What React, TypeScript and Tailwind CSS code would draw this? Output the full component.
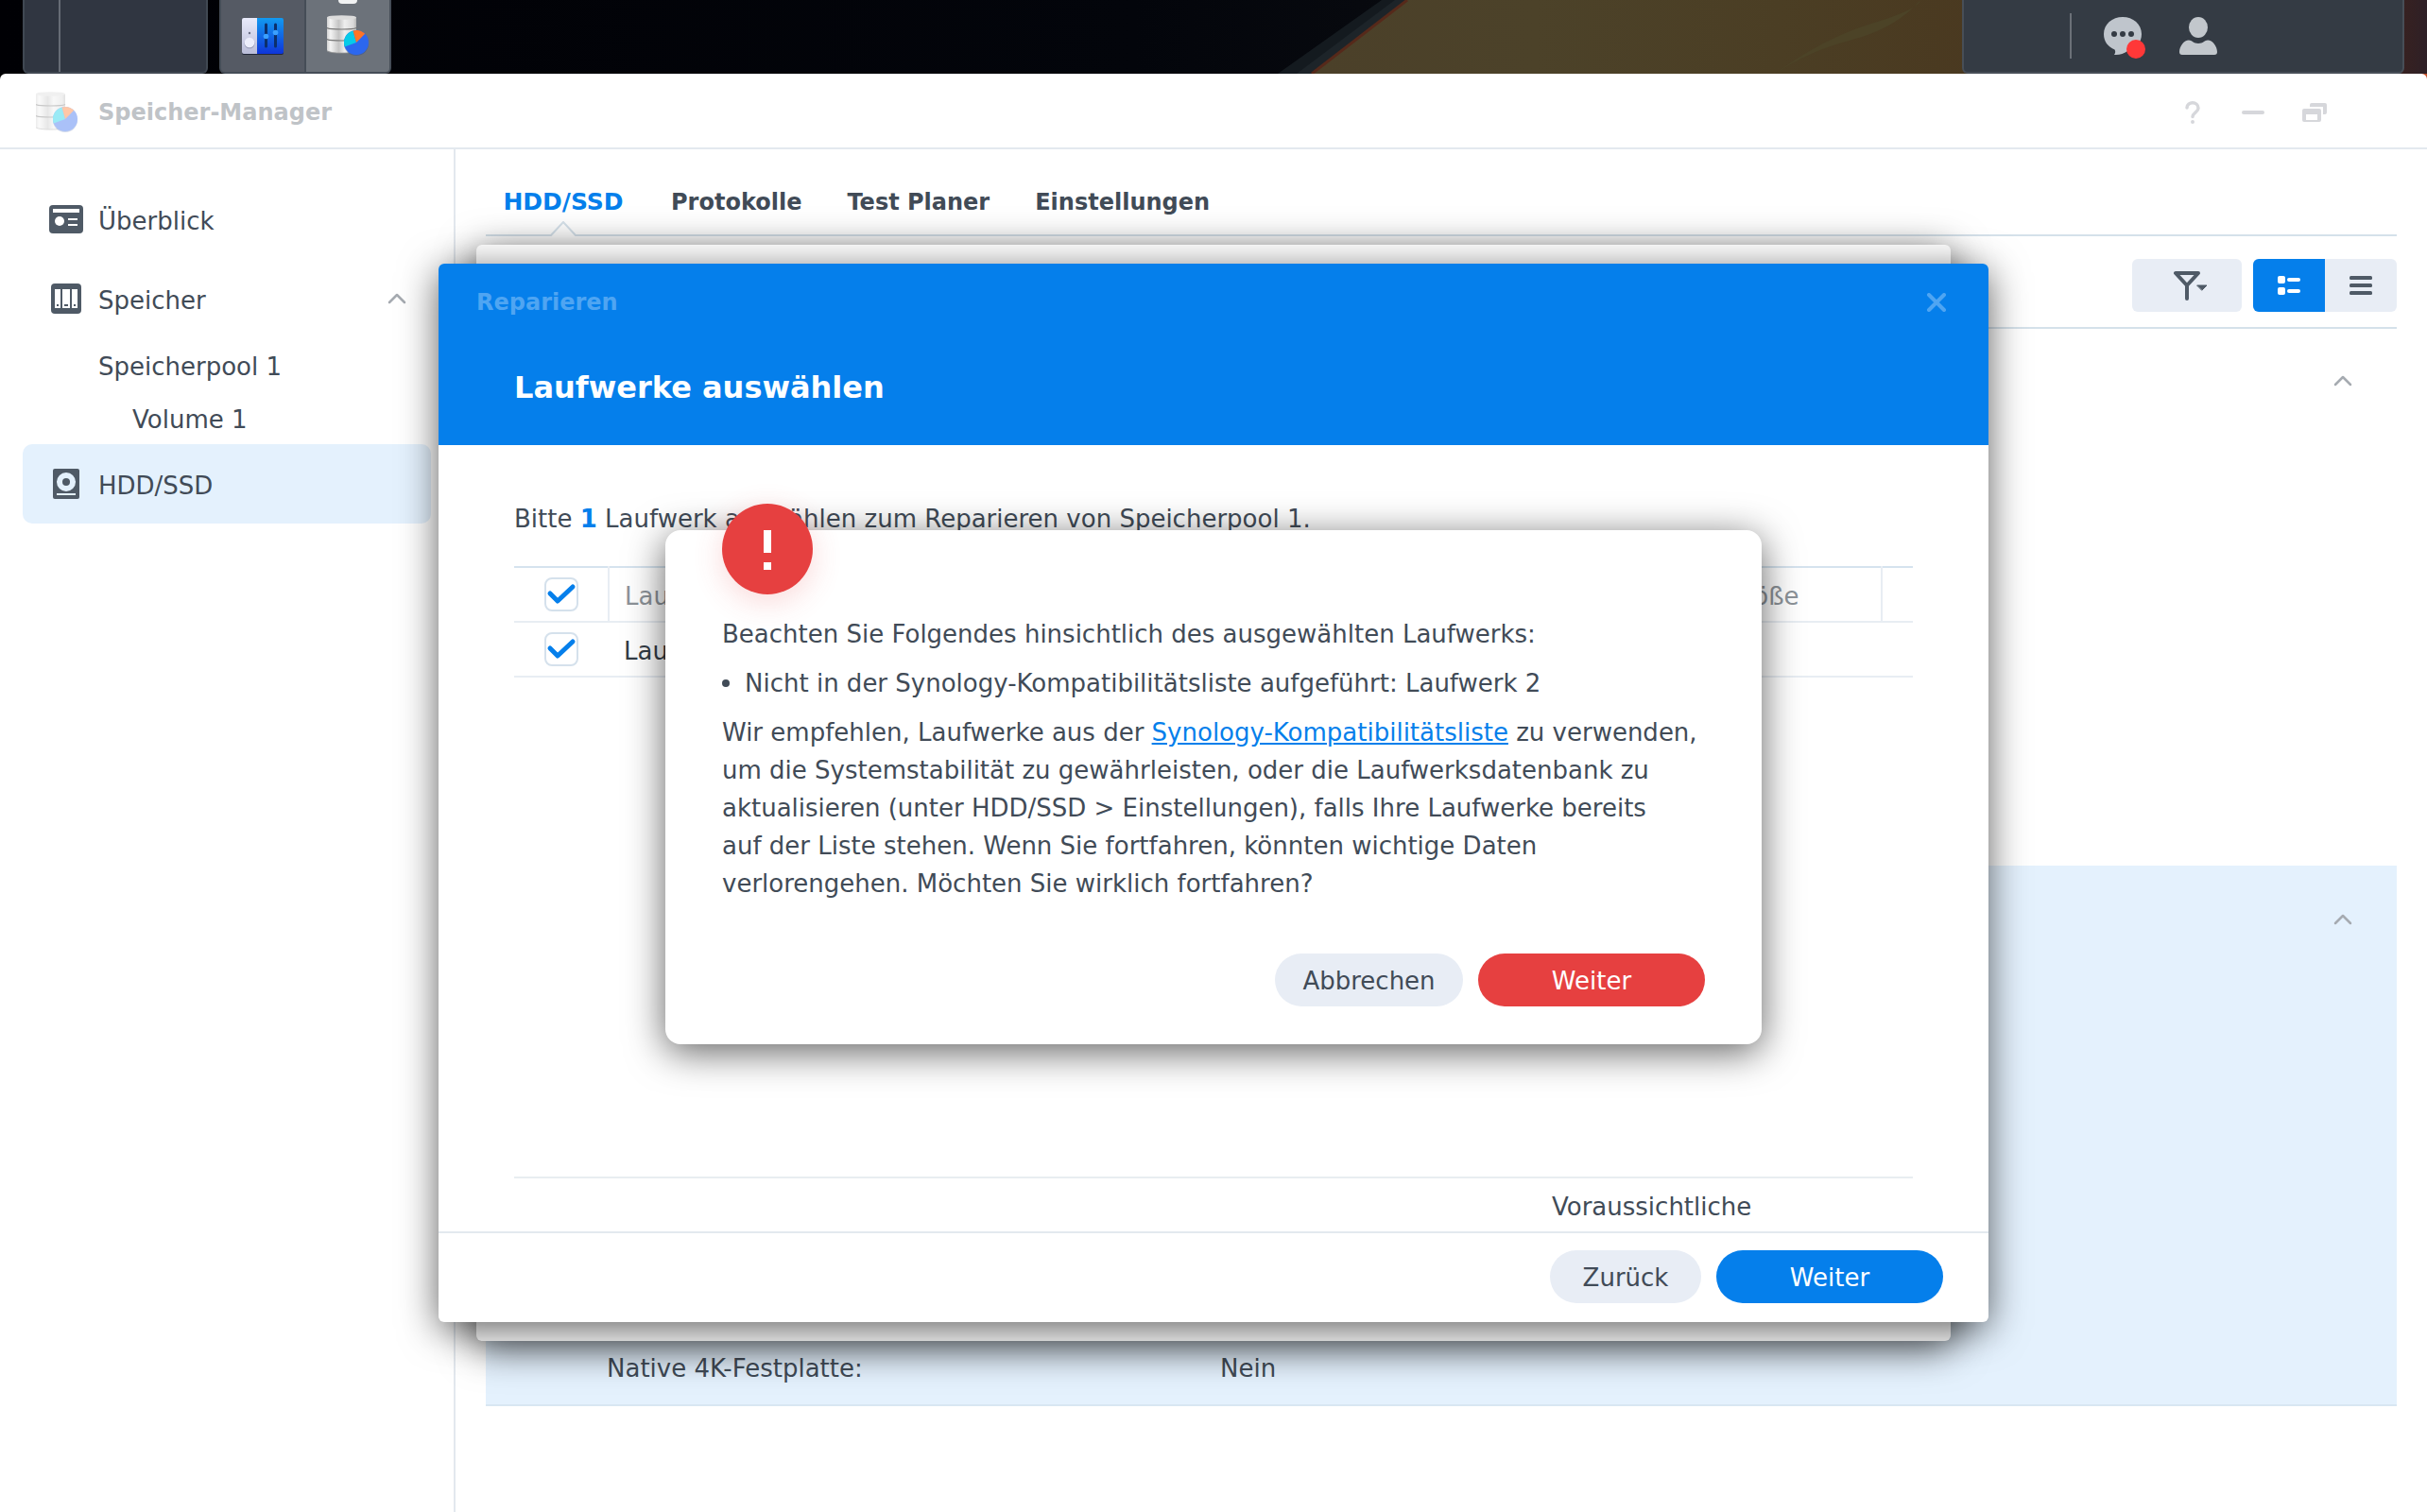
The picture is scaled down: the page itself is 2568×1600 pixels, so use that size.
import { useState } from "react";

const tabs = ["HDD/SSD", "Protokolle", "Test Planer", "Einstellungen"];

function Wallpaper() {
  return (
    <svg className="absolute inset-0 h-full w-full" viewBox="0 0 2568 78" preserveAspectRatio="none" aria-hidden="true">
      <defs>
        <linearGradient id="sky" x1="0" x2="1">
          <stop offset="0" stopColor="#000004" />
          <stop offset="0.8" stopColor="#03050b" />
          <stop offset="1" stopColor="#080a0f" />
        </linearGradient>
        <linearGradient id="sand" x1="0" x2="1">
          <stop offset="0" stopColor="#4b4029" />
          <stop offset="0.2" stopColor="#4c4229" />
          <stop offset="0.42" stopColor="#4b3e24" />
          <stop offset="0.6" stopColor="#4a3920" />
          <stop offset="0.95" stopColor="#43221a" />
          <stop offset="1" stopColor="#2e2026" />
        </linearGradient>
      </defs>
      <rect width="1500" height="78" fill="url(#sky)" />
      <path d="M1352 78L1462 0h26L1388 78z" fill="#141a1f" />
      <path d="M1372 78L1476 0h12L1388 78z" fill="#1d2429" />
      <path d="M1489 0H2568V78H1388z" fill="url(#sand)" />
      <path d="M1489 0L1388 78" stroke="#56291a" strokeWidth="3" />
      <path d="M1878 78Q1930 40 1980 25T2032 0Q2006 30 1960 42T1878 78z" fill="#4c4327" />
    </svg>
  );
}

function StorageIcon({ id }: { id: string }) {
  return (
    <svg className="h-11 w-11" viewBox="0 0 44 44" aria-hidden="true">
      <defs>
        <linearGradient id={id} x1="0" x2="1">
          <stop offset="0" stopColor="#d2d2d2" />
          <stop offset="0.12" stopColor="#f4f4f4" />
          <stop offset="0.4" stopColor="#c4c4c4" />
          <stop offset="0.6" stopColor="#eeeeee" />
          <stop offset="0.9" stopColor="#d9d9d9" />
          <stop offset="1" stopColor="#b5b5b5" />
        </linearGradient>
      </defs>
      <path d="M0 2.5v35c4 3.4 27 3.4 31 0v-35z" fill={"url(#" + id + ")"} />
      <ellipse cx="15.5" cy="2.5" rx="15.5" ry="2.3" fill="#dcdcdc" />
      <path d="M0 13.500c4 2 27 2 31 0M0 25.500c4 2 27 2 31 0" stroke="#777" strokeWidth="1.200" fill="none" />
      <path d="M0 38c4 2.800 27 2.800 31 0" stroke="#999" strokeWidth="0.800" fill="none" />
      <circle cx="31" cy="30" r="13" fill="#2b4f9f" opacity="0.5" />
      <circle cx="31" cy="29" r="13" fill="#2c67ee" />
      <path d="M31 29L18.800 33.500A13 13 0 0 1 27.500 16.500z" fill="#06cbe8" />
      <path d="M31 29L27.500 16.500A13 13 0 0 1 40.200 19.800z" fill="#ff7426" />
    </svg>
  );
}

function ControlIcon() {
  return (
    <svg className="h-10 w-11" viewBox="0 0 44 40" aria-hidden="true">
      <defs>
        <linearGradient id="panelLeft" x1="0" y1="0" x2="0" y2="1">
          <stop offset="0" stopColor="#e9ebfb" />
          <stop offset="1" stopColor="#babdd8" />
        </linearGradient>
        <linearGradient id="panelRight" x1="0" y1="0" x2="0" y2="1">
          <stop offset="0" stopColor="#129af0" />
          <stop offset="1" stopColor="#0f35d8" />
        </linearGradient>
      </defs>
      <rect y="2" width="44" height="38" rx="2" fill="#22283a" />
      <path d="M2 1h14v38H2a2 2 0 0 1-2-2V3a2 2 0 0 1 2-2z" fill="url(#panelLeft)" />
      <path d="M16 1h26a2 2 0 0 1 2 2v34a2 2 0 0 1-2 2H16z" fill="url(#panelRight)" />
      <path d="M25.500 8v23M35.500 8v23" stroke="#0b2f6b" strokeWidth="3" strokeLinecap="round" />
      <circle cx="25.500" cy="20.500" r="2.800" fill="#3ba0ff" />
      <circle cx="35.500" cy="16.500" r="2.800" fill="#3ba0ff" />
      <circle cx="8" cy="17" r="1.200" fill="#6a6f85" />
      <circle cx="8" cy="28" r="5.500" fill="#9b9fba" />
      <circle cx="8" cy="27" r="5.300" fill="#eceefb" />
    </svg>
  );
}

function ChevronUp() {
  return (
    <svg className="h-3 w-5" viewBox="0 0 20 12" fill="none" stroke="#a6abb1" strokeWidth="2.500" strokeLinecap="round" strokeLinejoin="round" aria-hidden="true">
      <path d="M2 10l8-8 8 8" />
    </svg>
  );
}

function Checkbox({ label }: { label: string }) {
  const [checked, setChecked] = useState(true);
  return (
    <label className="relative mx-auto block h-9 w-9">
      <input
        type="checkbox"
        aria-label={label}
        checked={checked}
        onChange={(e) => setChecked(e.target.checked)}
        className="block h-9 w-9 appearance-none rounded-lg border-2 border-[#d5e1ec] bg-white"
      />
      {checked && (
        <svg className="pointer-events-none absolute inset-0" viewBox="0 0 36 36" fill="none" stroke="#057feb" strokeWidth="5" strokeLinecap="round" strokeLinejoin="round" aria-hidden="true">
          <path d="M6 17l8 8 16-15" />
        </svg>
      )}
    </label>
  );
}

function Taskbar() {
  return (
    <header className="relative flex h-[78px] shrink-0 items-stretch gap-3 bg-black px-6">
      <Wallpaper />
      <div className="relative flex w-[196px] rounded-b-md border-2 border-t-0 border-[#404852] bg-[#303641]">
        <div className="ml-9 w-0.5 bg-[#666c75]" />
      </div>
      <div className="relative flex w-[182px] overflow-hidden rounded-b-md border-2 border-t-0 border-[#454d57] bg-[#555a64]">
        <button aria-label="Systemsteuerung" className="flex flex-1 items-center justify-center">
          <ControlIcon />
        </button>
        <button aria-label="Speicher-Manager" className="relative flex flex-1 items-center justify-center border-l-2 border-[#454d57] bg-[#6c727a]">
          <span className="absolute top-0 h-1 w-5 rounded-b-sm bg-[#f1f2f3]" />
          <StorageIcon id="cylTask" />
        </button>
      </div>
      <div className="relative ml-auto flex w-[468px] items-start rounded-b-md border-2 border-t-0 border-[#474e57] bg-[#343b44] pl-28">
        <div className="mt-3.5 h-12 w-0.5 bg-[#6b7078]" />
        <button aria-label="Benachrichtigungen" className="mt-[18px] ml-[34px]">
          <svg className="h-11 w-11" viewBox="0 0 44 44" aria-hidden="true">
            <path d="M20 0c11 0 20 7.500 20 18 0 9-6 15-14 17.500C21 39 16 40.500 11 40c1.500-2 1.500-4 .5-5.500C4.500 31.500 0 26 0 18 0 7.500 9 0 20 0z" fill="#bfc5cc" />
            <circle cx="11" cy="18" r="3" fill="#343b44" />
            <circle cx="20" cy="18" r="3" fill="#343b44" />
            <circle cx="29" cy="18" r="3" fill="#343b44" />
            <circle cx="34" cy="34" r="10" fill="#ff3838" />
          </svg>
        </button>
        <button aria-label="Benutzer" className="mt-[18px] ml-9">
          <svg className="h-10 w-10" viewBox="0 0 40 40" fill="#c2c7cc" aria-hidden="true">
            <ellipse cx="20" cy="11" rx="10" ry="11" />
            <path d="M10 24.500c3 0 5 3.500 10 3.500s7-3.500 10-3.500c5 0 10 6.500 10 12.500 0 2-1 3-3 3H3c-2 0-3-1-3-3 0-6 5-12.500 10-12.500z" />
          </svg>
        </button>
      </div>
    </header>
  );
}

function Titlebar() {
  return (
    <div className="flex h-20 shrink-0 items-center border-b-2 border-[#e3e9ef] pt-1 pr-[106px] pl-[38px]">
      <div className="opacity-40">
        <StorageIcon id="cylTitle" />
      </div>
      <h1 className="ml-[22px] flex-1 text-[24px] font-bold text-[#bfc3c7]">Speicher-Manager</h1>
      <div className="flex items-center gap-11 text-[#d6d7db]">
        <button aria-label="Hilfe">
          <svg className="h-6 w-4" viewBox="0 0 16 24" fill="none" stroke="currentColor" strokeWidth="3.500" strokeLinecap="round" aria-hidden="true">
            <path d="M2 7C2 3.500 5 1.800 8 1.800S14 4 14 7.500c0 4-6 5-6 9" />
            <circle cx="8" cy="22" r="1" fill="currentColor" strokeWidth="2" />
          </svg>
        </button>
        <button aria-label="Minimieren">
          <svg className="h-6 w-6" viewBox="0 0 24 24" aria-hidden="true">
            <rect y="10" width="24" height="4" rx="2" fill="currentColor" />
          </svg>
        </button>
        <button aria-label="Wiederherstellen">
          <svg className="-ml-1 h-5 w-[26px]" viewBox="0 0 26 20" fill="currentColor" aria-hidden="true">
            <path d="M10 0h14a2 2 0 0 1 2 2v8a2 2 0 0 1-2 2h-2V4H8V2a2 2 0 0 1 2-2z" />
            <path fillRule="evenodd" d="M2 6h16a2 2 0 0 1 2 2v10a2 2 0 0 1-2 2H2a2 2 0 0 1-2-2V8a2 2 0 0 1 2-2zm2 6v6h12v-6z" />
          </svg>
        </button>
      </div>
    </div>
  );
}

function Sidebar() {
  return (
    <nav className="flex w-[482px] shrink-0 flex-col border-r-2 border-[#e3e8ee] px-6 pt-8">
      <a href="#ueberblick" className="flex h-[84px] items-center gap-4 pl-7">
        <svg className="h-[30px] w-9" viewBox="0 0 36 30" fill="#4f5a66" aria-hidden="true">
          <rect width="36" height="30" rx="4" />
          <path d="M4 4h28v4H4zM20 14h10v2H20zM20 20h10v2H20z" fill="#fff" />
          <circle cx="11" cy="17" r="5" fill="#fff" />
        </svg>
        <span className="pt-1">Überblick</span>
      </a>
      <a href="#speicher" className="flex h-[84px] items-center gap-[18px] pr-[26px] pl-[30px]">
        <svg className="h-8 w-8" viewBox="0 0 32 32" fill="#4f5a66" aria-hidden="true">
          <rect width="32" height="32" rx="4" />
          <path d="M4 6h6v20H4zM12 6h8v20h-8zM22 6h6v20h-6z" fill="#fff" />
          <path d="M6 22h2v2H6zM14 22h4v2h-4zM24 22h2v2h-2z" />
        </svg>
        <span className="flex-1 pt-1">Speicher</span>
        <ChevronUp />
      </a>
      <a href="#pool" className="flex h-14 items-center pt-1 pl-20">Speicherpool 1</a>
      <a href="#volume" className="flex h-14 items-center pt-1 pl-[116px]">Volume 1</a>
      <a href="#hdd" className="flex h-[84px] items-center gap-5 rounded-[10px] bg-[#e4f1fd] pl-8">
        <svg className="h-8 w-7" viewBox="0 0 28 32" fill="#4f5a66" aria-hidden="true">
          <rect width="28" height="32" rx="2" />
          <circle cx="14" cy="14" r="10" fill="#e4f1fd" />
          <circle cx="14" cy="14" r="4" />
          <path d="M4 26h20v2H4z" fill="#e4f1fd" />
        </svg>
        <span className="pt-1">HDD/SSD</span>
      </a>
    </nav>
  );
}

function DriveList() {
  return (
    <main className="flex min-w-0 flex-1 flex-col pr-8 pl-8">
      <div className="flex h-[92px] items-center gap-12 border-b-2 border-[#d5e1ea] px-4 pt-[22px]">
        {tabs.map((tab, i) => (
          <button key={tab} className={i === 0 ? "relative h-full min-w-[132px] text-[25px] font-bold text-[#057feb]" : "h-full text-[24px] font-bold"}>
            {tab}
            {i === 0 && (
              <svg className="absolute -bottom-0.5 left-1/2 h-4 w-7 -translate-x-1/2" viewBox="0 0 28 16" aria-hidden="true">
                <path d="M0 16L14 1l14 15z" fill="#fff" />
                <path d="M0 15h1L14 1l13 14h1" fill="none" stroke="#d5e1ea" strokeWidth="2" />
              </svg>
            )}
          </button>
        ))}
      </div>
      <div className="flex h-[98px] items-end justify-end gap-3 border-b-2 border-[#d5e1ea] pb-4">
        <button aria-label="Filter" className="flex h-14 w-[116px] items-center justify-center rounded-md bg-[#e8edf5] pl-2">
          <svg className="h-8 w-9" viewBox="0 0 36 32" fill="none" stroke="#4f5a66" strokeWidth="4" strokeLinecap="round" strokeLinejoin="round" aria-hidden="true">
            <path d="M2 3h24L14 16zM14 16v14" />
            <path d="M25 16h10l-5 5z" fill="#4f5a66" strokeWidth="1" />
          </svg>
        </button>
        <div className="flex h-14 overflow-hidden rounded-md bg-[#e8edf5]">
          <button aria-label="Detailansicht" className="flex w-[76px] items-center justify-center bg-[#057feb]">
            <svg className="h-5 w-6" viewBox="0 0 24 20" fill="#fff" aria-hidden="true">
              <rect width="8" height="8" rx="2" />
              <rect y="12" width="8" height="8" rx="2" />
              <rect x="10" y="2" width="14" height="4" rx="2" />
              <rect x="10" y="14" width="14" height="4" rx="2" />
            </svg>
          </button>
          <button aria-label="Listenansicht" className="flex w-[76px] items-center justify-center">
            <svg className="h-5 w-6" viewBox="0 0 24 20" fill="#4f5a66" aria-hidden="true">
              <rect width="24" height="4" rx="1.500" />
              <rect y="8" width="24" height="4" rx="1.500" />
              <rect y="16" width="24" height="4" rx="1.500" />
            </svg>
          </button>
        </div>
      </div>
      <section className="flex h-[568px] items-start justify-end pt-[49px] pr-[47px]">
        <ChevronUp />
      </section>
      <section className="flex h-[572px] flex-col justify-between border-b-2 border-[#d8e6f2] bg-[#e4f1fd] pt-[51px]">
        <div className="flex justify-end pr-[47px]">
          <ChevronUp />
        </div>
        <dl className="flex h-20 items-center pt-1 pl-32">
          <dt className="w-[649px]">Native 4K-Festplatte:</dt>
          <dd>Nein</dd>
        </dl>
      </section>
    </main>
  );
}

function RepairDialog() {
  return (
    <div className="flex h-[1120px] w-[1640px] flex-col overflow-hidden rounded-md bg-white shadow-[0_8px_40px_rgba(0,0,0,0.62)]">
      <div className="h-48 shrink-0 bg-[#057feb]">
        <div className="flex h-20 items-center justify-between pt-0.5 pr-11 pl-10">
          <h2 className="text-[24px] font-bold text-[#4fa5f2]">Reparieren</h2>
          <button aria-label="Schließen">
            <svg className="h-5 w-[22px]" viewBox="0 0 22 20" stroke="#4fa5f2" strokeWidth="4" strokeLinecap="round" aria-hidden="true">
              <path d="M3 2l16 16M19 2L3 18" />
            </svg>
          </button>
        </div>
        <h3 className="px-20 pt-[26px] text-[32px] leading-[50px] font-bold text-white">Laufwerke auswählen</h3>
      </div>
      <div className="flex flex-1 flex-col px-20 pt-[58px]">
        <p className="leading-10">
          Bitte <b className="text-[#057feb]">1</b> Laufwerk auswählen zum Reparieren von Speicherpool 1.
        </p>
        <table className="mt-[30px] w-full table-fixed border-collapse border-t-2 border-[#d5e3ee] text-left">
          <thead>
            <tr className="h-[58px] border-b-2 border-[#e8edf3] text-[#8d9399]">
              <th className="w-[100px] border-r-2 border-[#e8edf3]">
                <Checkbox label="Alle auswählen" />
              </th>
              <th className="pt-1 pl-4 font-normal">Laufwerk</th>
              <th className="w-[166px] border-r-2 border-[#e8edf3] pt-1 font-normal">Größe</th>
              <th className="w-[33px]"></th>
            </tr>
          </thead>
          <tbody>
            <tr className="h-[58px] border-b-2 border-[#e8edf3]">
              <td>
                <Checkbox label="Laufwerk 2" />
              </td>
              <td className="pt-1 pl-4 text-[#333c46]">Laufwerk 2</td>
              <td></td>
              <td></td>
            </tr>
          </tbody>
        </table>
        <div className="mt-auto flex h-[58px] items-center border-t-2 border-[#e8edf1] pt-1">
          <span className="ml-auto w-[382px]">Voraussichtliche</span>
        </div>
      </div>
      <div className="flex h-24 shrink-0 items-start justify-end gap-4 border-t-2 border-[#e3e9ef] px-12 pt-[18px]">
        <button className="h-14 w-40 rounded-full bg-[#e8edf5] pt-0.5">Zurück</button>
        <button className="h-14 w-60 rounded-full bg-[#057feb] pt-0.5 text-white">Weiter</button>
      </div>
    </div>
  );
}

function WarningDialog() {
  return (
    <div role="alertdialog" className="relative mb-3 w-[1160px] rounded-2xl bg-white px-[60px] pt-[90px] pb-10 shadow-[0_8px_40px_rgba(0,0,0,0.62)]">
      <div className="absolute -top-7 left-[60px] h-24 w-24 rounded-full bg-[#e64040] shadow-[0_8px_32px_rgba(230,64,64,0.2)]">
        <svg viewBox="0 0 96 96" fill="#fff" aria-hidden="true">
          <path d="M44 28h8v24h-8zM44 62h8v8h-8z" />
        </svg>
      </div>
      <div className="flex flex-col gap-3 leading-10">
        <p>Beachten Sie Folgendes hinsichtlich des ausgewählten Laufwerks:</p>
        <ul>
          <li className="flex items-center gap-4">
            <span className="h-2 w-2 rounded-full bg-[#414b57]" />
            Nicht in der Synology-Kompatibilitätsliste aufgeführt: Laufwerk 2
          </li>
        </ul>
        <p className="whitespace-nowrap">
          Wir empfehlen, Laufwerke aus der{" "}
          <a href="#kompatibilitaet" className="text-[#057feb] underline">Synology-Kompatibilitätsliste</a> zu verwenden,
          <br />
          um die Systemstabilität zu gewährleisten, oder die Laufwerksdatenbank zu
          <br />
          aktualisieren (unter HDD/SSD &gt; Einstellungen), falls Ihre Laufwerke bereits
          <br />
          auf der Liste stehen. Wenn Sie fortfahren, könnten wichtige Daten
          <br />
          verlorengehen. Möchten Sie wirklich fortfahren?
        </p>
      </div>
      <div className="mt-[54px] flex justify-end gap-4">
        <button className="h-14 w-[199px] rounded-full bg-[#e8edf5] pt-0.5">Abbrechen</button>
        <button className="h-14 w-60 rounded-full bg-[#e64040] pt-0.5 text-white">Weiter</button>
      </div>
    </div>
  );
}

export default function App() {
  return (
    <div className="flex h-screen flex-col overflow-hidden bg-linear-to-r from-black to-[#c4502a] font-['DejaVu_Sans',Verdana,sans-serif] text-[26px] text-[#414b57]">
      <Taskbar />
      <div className="relative flex min-h-0 flex-1 flex-col rounded-t-md bg-white">
        <Titlebar />
        <div className="flex min-h-0 flex-1">
          <Sidebar />
          <DriveList />
        </div>
        <div className="absolute inset-0 flex items-center justify-center">
          <div className="h-[1160px] w-[1560px] rounded-md bg-white shadow-[0_8px_40px_rgba(0,0,0,0.62)]" />
        </div>
        <div className="absolute inset-0 flex items-center justify-center">
          <RepairDialog />
        </div>
        <div className="absolute inset-0 flex items-center justify-center">
          <WarningDialog />
        </div>
      </div>
    </div>
  );
}
